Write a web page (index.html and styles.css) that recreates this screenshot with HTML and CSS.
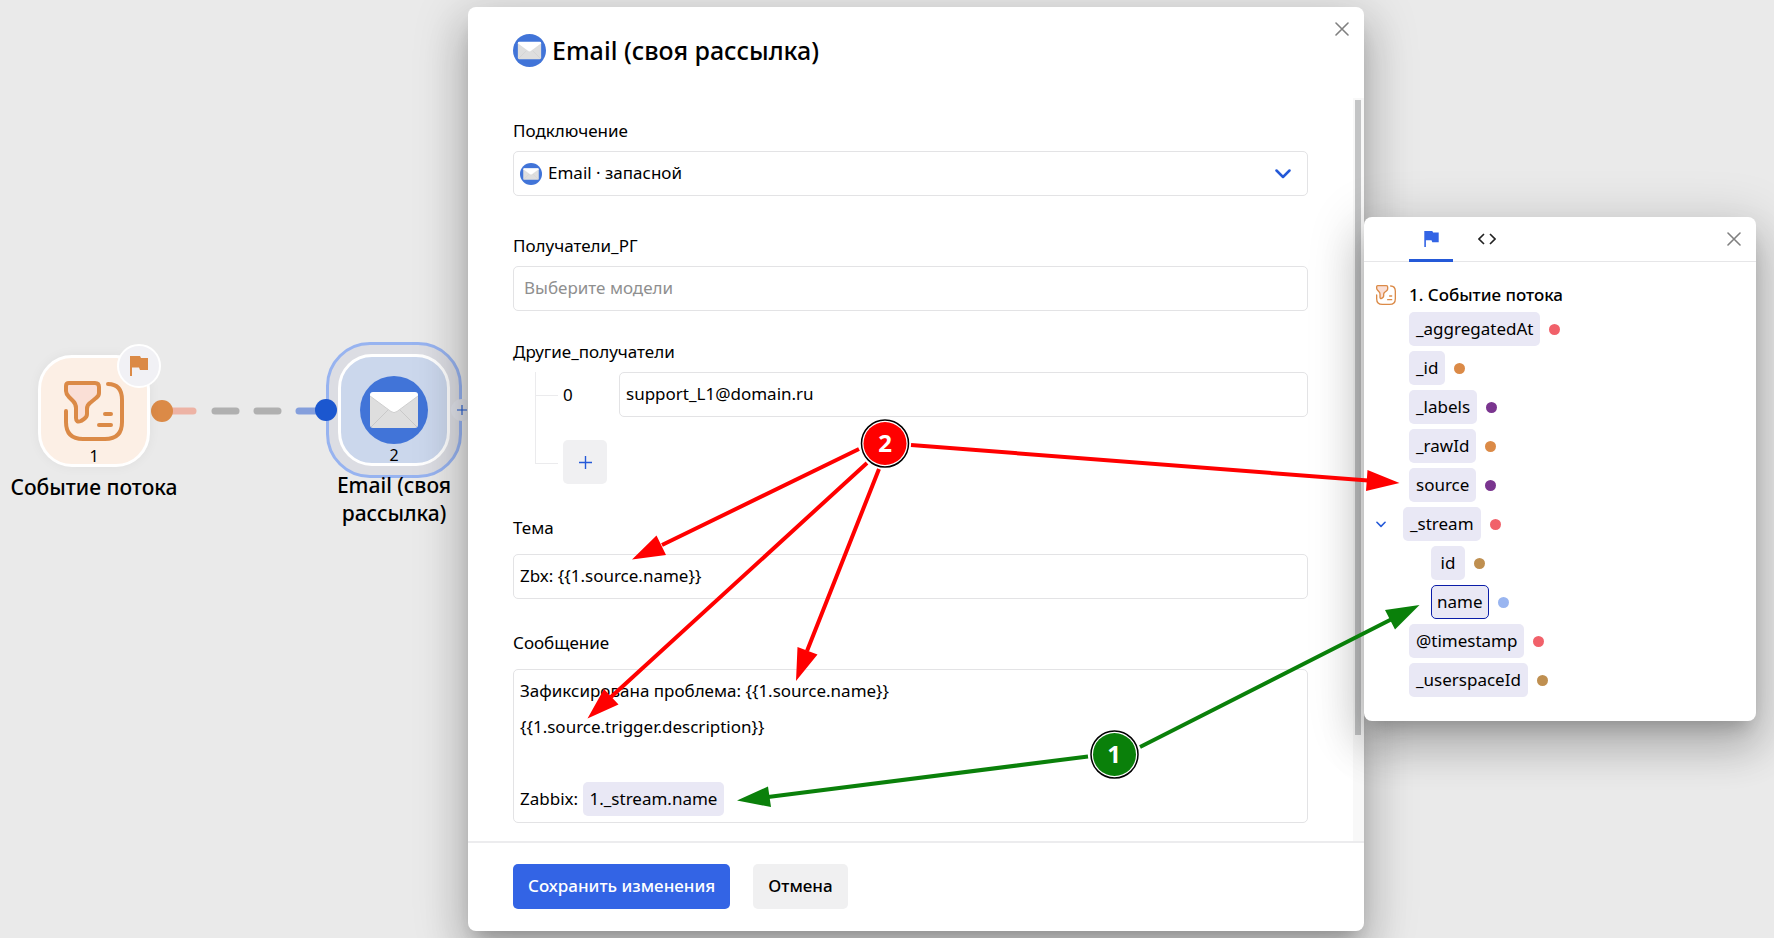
FILE: index.html
```html
<!DOCTYPE html>
<html lang="ru">
<head>
<meta charset="utf-8">
<title>Email (своя рассылка)</title>
<link rel="stylesheet" href="styles.css">
</head>
<body>
<svg class="sprite" aria-hidden="true">
  <symbol id="mail" viewBox="0 0 68 68">
    <circle cx="34" cy="34" r="34" fill="#4174d8"/>
    <rect x="10" y="17" width="48" height="35" rx="3" fill="#dedede"/>
    <path d="M11 51 28 34M57 51 40 34" stroke="#c9c9c9" stroke-width="1" fill="none"/>
    <path d="M10 20V19a3 3 0 0 1 3-3H55a3 3 0 0 1 3 3v1L37 35.500a5 5 0 0 1-6 0Z" fill="#fff"/>
    <path d="M10 20 31 35.500a5 5 0 0 0 6 0L58 20" stroke="#cfcfcf" stroke-width="1" fill="none"/>
  </symbol>
  <symbol id="stream" viewBox="0 0 60 60">
    <path d="M5 2H31Q35 2 35 6V12Q35 15 32 17L26 22Q23 24 23 28V33Q23 36 20 38L17 40Q12 42 12 37V27Q12 23 9 20L5 16Q2 13 2 10V5Q2 2 5 2Z" fill="#fadfd6"/>
    <path d="M5 2H31Q35 2 35 6V12Q35 15 32 17L26 22Q23 24 23 28V33Q23 36 20 38L17 40Q12 42 12 37V27Q12 23 9 20L5 16Q2 13 2 10V5Q2 2 5 2ZM44 3Q58 3 58 19V41Q58 58 41 58H19Q2 58 2 41V30M41 33H47M35 44H47" fill="none" stroke="#db8a47" stroke-width="4" stroke-linecap="round" stroke-linejoin="round"/>
  </symbol>
  <symbol id="flag" viewBox="0 0 18 20"><path d="M0 0H10L11 2H18V14H10L9 11.500H2V20H0Z" fill="currentColor"/></symbol>
  <symbol id="cross" viewBox="0 0 14 14"><path d="M1 1 13 13M13 1 1 13" stroke="currentColor" stroke-width="1.600" stroke-linecap="round"/></symbol>
  <symbol id="chevron" viewBox="0 0 16 10"><path d="M1.500 1.500 8 8 14.500 1.500" fill="none" stroke="currentColor" stroke-width="2.500" stroke-linecap="round" stroke-linejoin="round"/></symbol>
  <symbol id="plus" viewBox="0 0 14 14"><path d="M7 0V14M0 7H14" stroke="currentColor" stroke-width="1.500"/></symbol>
</svg>

<div class="stage">
  <section class="canvas" aria-label="Сценарий">
    <svg class="link" viewBox="0 0 190 24" aria-hidden="true">
      <g stroke-width="7" stroke-linecap="round">
        <path d="M20 12H43" stroke="#edb3a5"/><path d="M65 12H86" stroke="#b0b0b0"/><path d="M107 12H128" stroke="#b0b0b0"/><path d="M149 12H170" stroke="#859fdc"/>
      </g>
      <circle cx="12" cy="12" r="11" fill="#db8a47"/>
    </svg>
    <div class="node node-stream">
      <div class="tile tile-stream">
        <svg class="tile-icon"><use href="#stream"/></svg>
        <span class="order">1</span>
        <span class="flag-badge"><svg><use href="#flag"/></svg></span>
      </div>
      <p class="node-name">Событие потока</p>
    </div>
    <div class="node node-mail">
      <div class="ring">
        <div class="tile tile-mail">
          <svg class="tile-mail-icon"><use href="#mail"/></svg>
          <span class="order">2</span>
        </div>
        <span class="port"></span>
        <span class="add"><svg><use href="#plus"/></svg></span>
      </div>
      <p class="node-name">Email (своя рассылка)</p>
    </div>
  </section>

  <form class="modal" role="dialog" aria-labelledby="modal-title">
    <header class="modal-head">
      <svg class="title-icon"><use href="#mail"/></svg>
      <h1 id="modal-title">Email (своя рассылка)</h1>
      <button type="button" class="close modal-close" aria-label="Закрыть"><svg><use href="#cross"/></svg></button>
    </header>
    <div class="modal-body">
      <div class="fields">
        <div class="field">
          <label for="connection">Подключение</label>
          <div class="select-box">
            <svg class="select-icon"><use href="#mail"/></svg>
            <select id="connection"><option>Email · запасной</option></select>
            <svg class="select-arrow"><use href="#chevron"/></svg>
          </div>
        </div>
        <div class="field field-models">
          <label for="models">Получатели_РГ</label>
          <input id="models" class="box models" type="text" placeholder="Выберите модели">
        </div>
        <div class="field field-others">
          <label for="other0">Другие_получатели</label>
          <div class="tree">
            <div class="tree-row"><span class="index">0</span><input id="other0" class="box" type="text" value="support_L1@domain.ru"></div>
            <div class="tree-row tree-last"><button type="button" class="plus" aria-label="Добавить"><svg><use href="#plus"/></svg></button></div>
          </div>
        </div>
        <div class="field field-wide">
          <label for="subject">Тема</label>
          <input id="subject" class="box" type="text" value="Zbx: {{1.source.name}}">
        </div>
        <div class="field field-wide">
          <label id="message-label">Сообщение</label>
          <div class="box message" contenteditable="true" role="textbox" aria-multiline="true" aria-labelledby="message-label" spellcheck="false">
            <p>Зафиксирована проблема: {{1.source.name}}</p>
            <p>{{1.source.trigger.description}}</p>
            <p><br></p>
            <p>Zabbix: <span class="chip inline-chip">1._stream.name</span></p>
          </div>
        </div>
      </div>
      <div class="track"><div class="thumb"></div></div>
    </div>
    <footer class="modal-foot">
      <button type="submit" class="btn primary">Сохранить изменения</button>
      <button type="button" class="btn">Отмена</button>
    </footer>
  </form>

  <aside class="panel" aria-label="Переменные">
    <header class="panel-head">
      <div class="tabs" role="tablist">
        <button type="button" class="tab active" role="tab" aria-selected="true" aria-label="Переменные"><svg class="tab-flag"><use href="#flag"/></svg></button>
        <button type="button" class="tab" role="tab" aria-selected="false" aria-label="Код"><svg class="tab-code" viewBox="0 0 18 12"><path d="M6 1 1 6 6 11M12 1 17 6 12 11" fill="none" stroke="#222" stroke-width="1.600"/></svg></button>
      </div>
      <button type="button" class="close" aria-label="Закрыть"><svg><use href="#cross"/></svg></button>
    </header>
    <div class="panel-body">
      <h2><svg><use href="#stream"/></svg>1. Событие потока</h2>
      <ul class="vars">
        <li><button type="button" class="chip">_aggregatedAt</button><i class="dot red"></i></li>
        <li><button type="button" class="chip">_id</button><i class="dot orange"></i></li>
        <li><button type="button" class="chip">_labels</button><i class="dot violet"></i></li>
        <li><button type="button" class="chip">_rawId</button><i class="dot orange"></i></li>
        <li><button type="button" class="chip">source</button><i class="dot violet"></i></li>
        <li class="parent"><button type="button" class="toggle" aria-label="Свернуть" aria-expanded="true"><svg><use href="#chevron"/></svg></button><button type="button" class="chip">_stream</button><i class="dot red"></i></li>
        <li class="child"><button type="button" class="chip">id</button><i class="dot brown"></i></li>
        <li class="child"><button type="button" class="chip selected">name</button><i class="dot blue"></i></li>
        <li><button type="button" class="chip">@timestamp</button><i class="dot red"></i></li>
        <li><button type="button" class="chip">_userspaceId</button><i class="dot brown"></i></li>
      </ul>
    </div>
  </aside>

  <svg class="notes" viewBox="0 0 1774 938">
    <g stroke="#f00" fill="#f00" stroke-width="4">
      <path d="M859 449 662 545M867 463 611 697M879 469 807 651M911 445 1368 480.500"/>
      <path stroke="none" d="M632 559.500 656.500 535.500 666 555ZM587.500 718.500 604 689 618.500 704.500ZM796 681 797.500 647 817.500 654.500ZM1399.500 483 1367.500 470 1366 491Z"/>
    </g>
    <g stroke="#0a800a" fill="#0a800a" stroke-width="4">
      <path d="M1088 756.500 768 797M1140 747 1391 619.500"/>
      <path stroke="none" d="M737 800.500 768 786.500 771 807ZM1419.500 605 1385 610 1395 629.500Z"/>
    </g>
    <g stroke="#000" stroke-width="1.500"><circle cx="885" cy="443.500" r="23.500" fill="#fff"/><circle cx="1114.500" cy="754.500" r="23.500" fill="#fff"/></g>
    <circle cx="885" cy="443.500" r="21.500" fill="#f00"/><circle cx="1114.500" cy="754.500" r="21.500" fill="#0a800a"/>
    <text class="note-num" x="885" y="452">2</text><text class="note-num" x="1114" y="763">1</text>
  </svg>
</div>
</body>
</html>
```
FILE: styles.css
```css
* { box-sizing: border-box; }
body { margin: 0; background: #eaeaea; color: #000; font: 17px/24px "Noto Sans", "Open Sans", sans-serif; }
h1, h2, p, ul { margin: 0; padding: 0; }
button, input, select { font: inherit; color: inherit; }
button { border: 0; background: none; padding: 0; cursor: pointer; }
svg { display: block; flex: none; }
.sprite { position: absolute; width: 0; height: 0; }

.stage { position: relative; display: flex; min-height: 100vh; padding: 7px 18px 7px 0; overflow: hidden; }
.canvas { position: relative; flex: 1; }

.node { position: absolute; display: flex; flex-direction: column; align-items: center; width: 180px; }
.node-stream { left: 4px; top: 348px; }
.node-mail { left: 304px; top: 335px; }
.tile { position: relative; width: 112px; height: 112px; border: 3px solid #fff; border-radius: 34px; display: flex; flex-direction: column; align-items: center; }
.tile-stream { background: #fcefe5; padding-top: 23px; box-shadow: 0 0 12px rgba(0, 0, 0, .05); }
.tile-icon { width: 60px; height: 60px; }
.tile-mail { background: #cbd7ec; padding-top: 19px; }
.tile-mail-icon { width: 68px; height: 68px; }
.order { position: absolute; bottom: -1px; font-size: 16px; line-height: 18px; }
.flag-badge { position: absolute; top: -14px; right: -14px; width: 44px; height: 44px; border: 2px solid #fff; border-radius: 50%; background: #f1f1f5; color: #db8a47; display: grid; place-items: center; }
.flag-badge svg { width: 18px; height: 20px; }
.ring { position: relative; padding: 9px; border: 3px solid #97b3f0; border-radius: 44px; background: #dcdde3; }
.port { position: absolute; left: -14px; top: 54px; width: 22px; height: 22px; border-radius: 50%; background: #1b57cf; }
.add { position: absolute; right: -14px; top: 54px; width: 22px; height: 22px; border-radius: 50%; background: #e1e3ea; color: #1b57cf; display: grid; place-items: center; }
.add svg { width: 10px; height: 10px; }
.node-name { font-size: 21px; line-height: 28px; font-weight: 500; text-align: center; }
.node-stream .node-name { margin-top: 6px; }
.node-mail .node-name { width: 130px; margin-top: -7px; position: relative; }
.link { position: absolute; left: 150px; top: 392px; width: 190px; height: 24px; }

.modal, .panel { background: #fff; border-radius: 8px; box-shadow: 0 12px 17px -8px rgba(0, 0, 0, .2), 0 27px 42px 3px rgba(0, 0, 0, .16), 0 10px 51px 9px rgba(0, 0, 0, .14); }
.modal { position: relative; flex: 0 1 896px; display: flex; flex-direction: column; }
.modal-head { display: flex; align-items: center; gap: 6px; height: 91px; padding: 0 45px 5px; }
.title-icon { width: 33px; height: 33px; }
h1 { font-size: 25px; line-height: 32px; font-weight: 500; }
.close { color: #808080; }
.close svg { width: 14px; height: 14px; }
.modal-close { position: absolute; right: 15px; top: 15px; }
.modal-body { flex: 1; display: flex; }
.fields { flex: 1; padding: 21px 56px 18px 45px; }
.field { display: flex; flex-direction: column; gap: 8px; }
.field-models { margin-top: 38px; }
.field-others { margin-top: 29px; }
.field-wide { margin-top: 32px; gap: 14px; }
.box, .select-box { border: 1px solid #e3e3e5; border-radius: 5px; background: none; height: 45px; width: 100%; padding: 0 6px 2px; }
.box { outline: 0; }
.select-box { display: flex; align-items: center; gap: 6px; padding: 0 16px 0 6px; }
.select-icon { width: 22px; height: 22px; }
select { flex: 1; border: 0; background: none; appearance: none; padding: 0 0 2px; outline: 0; }
.select-arrow { width: 16px; height: 10px; color: #2459d8; }
.models { padding: 0 10px 2px; }
.models::placeholder { color: #8f8f8f; opacity: 1; }
.tree { margin-left: 22px; }
.tree-row { position: relative; display: flex; align-items: center; padding-left: 28px; }
.tree-row::before { content: ""; position: absolute; left: 0; top: 0; width: 22px; height: 23px; border: solid #ebebed; border-width: 0 0 1px 1px; }
.tree-row .index { flex: 0 0 56px; }
.tree-last { padding-top: 23px; }
.tree-last::before { top: -22px; height: 68px; }
.plus { width: 44px; height: 44px; border-radius: 5px; background: #f0f0f2; color: #2459d8; display: grid; place-items: center; }
.plus svg { width: 13px; height: 13px; }
.message { height: auto; min-height: 154px; padding: 3px 6px 5px; line-height: 36px; }
.chip { display: inline-block; height: 34px; min-width: 34px; padding: 0 7px; border-radius: 5px; background: #e9e8f5; line-height: 32px; }
.inline-chip { line-height: 34px; }
.track { width: 11px; background: #f8f8f8; padding: 2px 3px 0 2px; margin-left: -11px; }
.thumb { height: 635px; background: #c3c4c5; }
.modal-foot { display: flex; gap: 23px; padding: 21px 45px 22px; border-top: 2px solid #ececee; }
.btn { height: 45px; padding: 0 15px 2px; border-radius: 5px; background: #f0f0f1; font-weight: 500; }
.primary { background: #3364e5; color: #fff; }

.panel { position: relative; flex: 0 0 392px; align-self: flex-start; margin-top: 210px; }
.panel-head { display: flex; align-items: center; justify-content: space-between; height: 45px; padding: 0 15px 0 45px; border-bottom: 1px solid #e6e6e8; }
.tabs { display: flex; gap: 12px; align-self: stretch; }
.tab { width: 44px; height: 45px; padding-top: 2px; border-bottom: 3px solid transparent; display: grid; place-items: center; }
.tab.active { border-color: #2459d8; color: #3364e5; }
.tab-flag { width: 15px; height: 16px; }
.tab-code { width: 18px; height: 12px; }
.panel-body { padding: 20px 12px 24px; }
h2 { display: flex; align-items: center; gap: 13px; font-size: 17px; line-height: 26px; font-weight: 500; }
h2 svg { width: 20px; height: 20px; }
.vars { list-style: none; margin-top: 4px; display: flex; flex-direction: column; gap: 5px; }
.vars li { display: flex; align-items: center; gap: 9px; padding-left: 33px; }
.vars .parent { padding-left: 0; }
.vars .child { padding-left: 55px; }
.toggle { width: 18px; color: #2459d8; }
.toggle svg { width: 10px; height: 7px; }
.dot { width: 11px; height: 11px; border-radius: 50%; }
.red { background: #f1616a; }
.orange { background: #db8a47; }
.violet { background: #7a358f; }
.brown { background: #bf8f50; }
.blue { background: #99b5f0; }
.selected { border: 1px solid #0b1da8; padding: 0 5px; line-height: 30px; }

.notes { position: absolute; left: 0; top: 0; width: 100%; pointer-events: none; }
.note-num { font-size: 24px; font-weight: 700; fill: #fff; text-anchor: middle; }
```
